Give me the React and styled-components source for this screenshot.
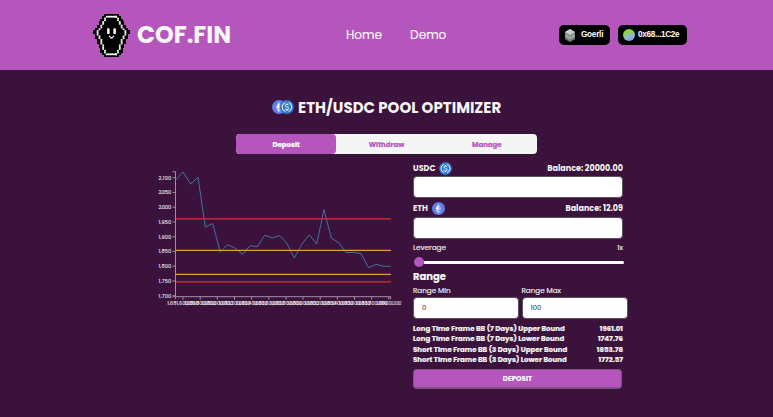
import React from "react";
import styled, { createGlobalStyle } from "styled-components";

const Global = createGlobalStyle`
  * { box-sizing: border-box; }
  body { margin: 0; background: #3b123c; overflow: hidden; }
  button, input { font: inherit; }
`;
const Page = styled.div`
  height: 417px;
  background: #3b123c;
  color: #f5f5f5;
  font-family: Poppins, Inter, sans-serif;
`;
const Text = styled.span`
  display: block;
  white-space: nowrap;
  font-size: ${(p) => p.$size || 7.2}px;
  font-weight: ${(p) => p.$weight || 700};
  letter-spacing: ${(p) => p.$track || 0}px;
  -webkit-text-stroke: ${(p) => p.$stroke || 0}px currentColor;
  line-height: 1;
`;
const Header = styled.header`
  height: 70px;
  padding: 0 86px 0 93px;
  display: grid;
  grid-template-columns: 253px 1fr auto;
  align-items: center;
  background: #b556bd;
`;
const Brand = styled.div`
  display: flex;
  align-items: center;
  gap: 7px;
  svg { display: block; flex: none; }
`;
const Nav = styled.nav`
  display: flex;
  gap: 28px;
`;
const Wallet = styled.div`
  display: flex;
  gap: 8px;
`;
const Badge = styled.button`
  width: ${(p) => p.$width}px;
  height: 20px;
  padding: 0 0 0 5px;
  border: 0;
  border-radius: 5px;
  background: #000;
  color: #fff;
  font-family: "Liberation Sans", sans-serif;
  display: flex;
  align-items: center;
  gap: ${(p) => p.$gap}px;
`;
const Title = styled.h1`
  margin: 0;
  height: 64px;
  padding: 10px 0 0 272px;
  display: flex;
  align-items: center;
  gap: 4px;
  svg { flex: none; }
`;
const Tabs = styled.div`
  width: 301px;
  height: 20px;
  margin-left: 236px;
  display: grid;
  grid-template-columns: repeat(3, 1fr);
  border-radius: 4px;
  overflow: hidden;
  background: #f5f5f5;
`;
const Tab = styled.button`
  border: 0;
  padding: 0;
  display: flex;
  align-items: center;
  justify-content: center;
  border-radius: 4px;
  background: ${(p) => (p.$active ? "#b556bd" : "transparent")};
  color: ${(p) => (p.$active ? "#fff" : "#b556bd")};
`;
const Content = styled.main`
  display: grid;
  grid-template-columns: 263px 215px;
  padding: 6px 0 0 150px;
`;
const Plot = styled.svg`
  display: block;
  font-family: Poppins, Inter, sans-serif;
  font-size: 5px;
  font-weight: 500;
`;
const Form = styled.form`
  width: 210px;
  display: flex;
  flex-direction: column;
`;
const Row = styled.div`
  height: ${(p) => p.$height}px;
  padding-top: ${(p) => p.$drop || 0}px;
  display: flex;
  align-items: center;
  justify-content: space-between;
`;
const Token = styled.div`
  display: flex;
  align-items: center;
  gap: ${(p) => p.$gap}px;
  svg { flex: none; margin-top: -1px; }
`;
const Field = styled.input`
  width: ${(p) => p.$width || 210}px;
  height: 22px;
  flex: none;
  padding: 0 8px;
  border: 1px solid #5c5260;
  border-radius: 4px;
  outline: 0;
  background: #fff;
  color: #111;
  font-size: 6.8px;
`;
const Slider = styled.div`
  width: 211px;
  height: 16px;
  display: flex;
  align-items: center;
`;
const Thumb = styled.i`
  width: 10px;
  height: 10px;
  margin-left: 1px;
  border-radius: 50%;
  background: #b556bd;
`;
const Track = styled.i`
  flex: 1;
  height: 3px;
  border-radius: 0 2px 2px 0;
  background: #fff;
`;
const Range = styled.div`
  width: 215px;
  display: grid;
  grid-template-columns: 106px 106px;
  column-gap: 2.5px;
`;
const Label = styled.label`
  height: 14px;
  padding-top: 2px;
  display: flex;
  align-items: center;
`;
const Bounds = styled.div`
  padding-top: 4px;
`;
const Submit = styled.button`
  width: 209px;
  height: 20px;
  margin-top: 4px;
  padding: 0;
  display: flex;
  align-items: center;
  justify-content: center;
  border: 1px solid #805080;
  border-bottom-width: 2px;
  border-radius: 4px;
  background: #b556bd;
  color: #fff;
`;

const outer = [4, 5, 5, 6, 7, 7, 8, 8, 9, 10, 10, 9, 9, 9, 8, 8, 8, 7, 7, 6, 6, 6, 5, 4];
const trim = [0, 3, 4, 4, 5, 5, 6, 6, 7, 8, 8, 8, 7, 7, 6, 6, 6, 5, 5, 5, 4, 4, 3, 0];
const Coffin = () => (
  <svg width="37" height="43" viewBox="0 0 20 24" preserveAspectRatio="none">
    <g shapeRendering="crispEdges">
      {outer.map((h, y) => <rect key={y} x={10 - h} y={y} width={h * 2} height="1" />)}
    </g>
    <g fill="#f5f5f5">
      {trim.map((h, y) => h > 0 && (
        <React.Fragment key={y}>
          <rect x={10 - h} y={y} width={y === 1 || y === 22 ? h * 2 : 1} height="1" />
          <rect x={9 + h} y={y} width="1" height="1" />
        </React.Fragment>
      ))}
      <rect x="7.6" y="7.9" width="1.4" height="3.3" rx=".5" />
      <rect x="11" y="7.9" width="1.4" height="3.3" rx=".5" />
      <path d="M8.6 12.2h.8v.6h1.2v-.6h.8v.8h-.7v.7H9.3V13h-.7z" />
    </g>
  </svg>
);
const EthShape = () => (
  <g>
    <circle cx="8" cy="8" r="8" fill="#627eea" />
    <path d="M8 2.2 4.5 8.2 8 10.3z" fill="#fff" />
    <path d="M8 2.2v8.1l3.5-2.1z" fill="#fff" opacity=".5" />
    <path d="M8 11.2 4.5 9.1 8 14z" fill="#fff" />
    <path d="M8 11.2V14l3.5-4.9z" fill="#fff" opacity=".5" />
  </g>
);
const UsdcShape = () => (
  <g>
    <circle cx="8" cy="8" r="8" fill="#2f79ca" />
    <g fill="none" stroke="#fff" strokeWidth="1.1">
      <path d="M6.2 2.8a5.5 5.5 0 0 0 0 10.4M9.8 2.8a5.5 5.5 0 0 1 0 10.4" />
      <path d="M10 6.3C9.8 4.6 6.1 4.5 6.1 6.3c0 2 4 1.1 4 3.3 0 2-4 2-4.2 0M8 3.7v1.4m0 6v1.4" />
    </g>
  </g>
);
const Coin = ({ children }) => <svg width="13" height="13" viewBox="0 0 16 16">{children}</svg>;

const points = "176,179.7 183,172 190.7,184 198,177.3 205.3,227 212.7,223.7 220.3,252 227.7,244.7 235,248 242.7,254.3 250,245.7 257.3,246.7 264.7,235.3 272.3,238 279.6,235.6 286.7,243 294.3,258 302,244 309.3,234.7 316.7,244 324,209.7 331.3,238 339,243 346.3,252.7 353.7,252.3 361,253.7 368.7,267.7 376,264.3 383.3,266.3 390.7,266.3";
const yTicks = ["2,100", "2,050", "2,000", "1,950", "1,900", "1,850", "1,800", "1,750", "1,700"];
const xTicks = [183, 200.2, 217.3, 234.5, 251.7, 268.8, 286, 303, 320.2, 337.3, 354.5, 371.7, 388.8];
const xLabel = (i) => (1681600000 + i * 200000).toLocaleString("en-US");

const Chart = () => (
  <Plot width="254" height="150" viewBox="150 160 254 150">
    <g stroke="#a18ea4" strokeWidth="1" fill="none">
      <path d="M172.5 171.7H175.5V296.7H172.5M175.5 299V296.7H390.7V299" />
      {yTicks.map((t, i) => <path key={t} d={`M172.5 ${177.7 + i * 14.75}h3`} />)}
      {xTicks.map((x) => <path key={x} d={`M${x} 296.7v3`} />)}
    </g>
    <g fill="#f5f0f5">
      {yTicks.map((t, i) => <text key={t} x="171.3" y={179.5 + i * 14.75} textAnchor="end" textLength="12.8">{t}</text>)}
      {xTicks.map((x, i) => <text key={x} x={x} y="305" textAnchor="middle" textLength={i === 12 ? 24.5 : 31.5} lengthAdjust="spacingAndGlyphs">{xLabel(i)}</text>)}
    </g>
    <polyline points={points} fill="none" stroke="#4682b4" strokeWidth=".85" />
    <path d="M176 218.8h215M176 281.8h215" stroke="#d93030" strokeWidth="1.2" />
    <path d="M176 250.4h215M176 274.4h215" stroke="#e49a35" strokeWidth="1.2" />
  </Plot>
);

const bounds = [
  ["Long Time Frame BB (7 Days) Upper Bound", "1961.01"],
  ["Long Time Frame BB (7 Days) Lower Bound", "1747.76"],
  ["Short Time Frame BB (3 Days) Upper Bound", "1853.78"],
  ["Short Time Frame BB (3 Days) Lower Bound", "1772.57"],
];

export default function App() {
  return (
    <Page>
      <Global />
      <Header>
        <Brand><Coffin /><Text $size={23.8} $track={-0.05}>COF.FIN</Text></Brand>
        <Nav><Text $size={12.1} $weight={400} $stroke={0.15}>Home</Text><Text $size={12.1} $weight={400} $stroke={0.15}>Demo</Text></Nav>
        <Wallet>
          <Badge $width={51} $gap={5}>
            <svg width="12" height="13" viewBox="0 0 12 13"><path d="m6 0 5 3v7l-5 3-5-3V3z" fill="#7f8888" /><path d="m6 0 5 3-5 3-5-3z" fill="#c8cccc" /><path d="m1 5 5 3 5-3v2L6 10 1 7z" fill="#a5adad" /><path d="m1 9 5 3 5-3v1l-5 3-5-3z" fill="#596161" /></svg>
            <Text $size={8.2} $track={-0.25}>Goerli</Text>
          </Badge>
          <Badge $width={69} $gap={3}>
            <svg width="12" height="12" viewBox="0 0 12 12"><defs><linearGradient id="avatar" x1=".3" y1="0" x2=".7" y2="1"><stop offset=".3" stopColor="#8ad447" /><stop offset=".65" stopColor="#91b6da" /><stop offset="1" stopColor="#8790e8" /></linearGradient></defs><circle cx="6" cy="6" r="6" fill="url(#avatar)" /></svg>
            <Text $size={8.2} $track={-0.3}>0x68...1C2e</Text>
          </Badge>
        </Wallet>
      </Header>
      <Title>
        <svg width="22" height="14" viewBox="0 0 25 16"><EthShape /><g transform="translate(9)"><UsdcShape /></g></svg>
        <Text $size={15} $track={0.02}>ETH/USDC POOL OPTIMIZER</Text>
      </Title>
      <Tabs>
        <Tab $active><Text $size={7} $stroke={0.2}>Deposit</Text></Tab>
        <Tab><Text $size={7} $stroke={0.2}>Withdraw</Text></Tab>
        <Tab><Text $size={7} $stroke={0.2}>Manage</Text></Tab>
      </Tabs>
      <Content>
        <Chart />
        <Form onSubmit={(e) => e.preventDefault()}>
          <Row $height={16} $drop={1}><Token $gap={4}><Text $size={8}>USDC</Text><Coin><UsdcShape /></Coin></Token><Text $size={8}>Balance: 20000.00</Text></Row>
          <Field aria-label="USDC" />
          <Row $height={19} $drop={2}><Token $gap={4}><Text $size={8}>ETH</Text><Coin><EthShape /></Coin></Token><Text $size={8}>Balance: 12.09</Text></Row>
          <Field aria-label="ETH" />
          <Row $height={15} $drop={3}><Text $weight={400} $stroke={0.15}>Leverage</Text><Text $weight={400} $stroke={0.15}>1x</Text></Row>
          <Slider><Thumb /><Track /></Slider>
          <Row $height={13}><Text $size={10} $stroke={0.15}>Range</Text></Row>
          <Range>
            <Label><Text $weight={400} $stroke={0.15}>Range Min</Text></Label><Label><Text $weight={400} $stroke={0.15}>Range Max</Text></Label>
            <Field $width={106} defaultValue="0" aria-label="Range Min" /><Field $width={106} defaultValue="100" aria-label="Range Max" />
          </Range>
          <Bounds>{bounds.map(([name, value]) => <Row $height={10.5} key={name}><Text $size={7} $stroke={0.2}>{name}</Text><Text $size={7} $stroke={0.2}>{value}</Text></Row>)}</Bounds>
          <Submit><Text $size={7} $stroke={0.1}>DEPOSIT</Text></Submit>
        </Form>
      </Content>
    </Page>
  );
}
